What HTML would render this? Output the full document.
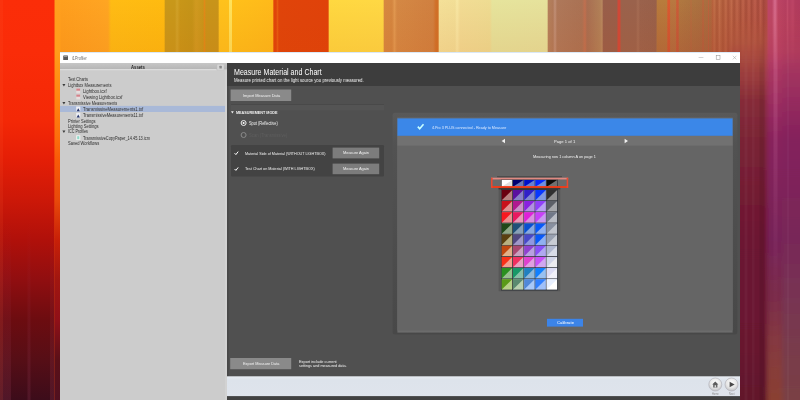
<!DOCTYPE html>
<html><head><meta charset="utf-8"><title>i1Profiler</title>
<style>
*{margin:0;padding:0;box-sizing:border-box}
html,body{width:800px;height:400px;overflow:hidden;background:#50101c;font-family:"Liberation Sans",sans-serif}
svg{position:absolute;left:0;top:0;display:block}
.t{position:absolute;white-space:nowrap;transform-origin:0 50%}
</style></head><body>
<svg width="800" height="400" viewBox="0 0 800 400">
<defs>
<linearGradient id="gt" gradientUnits="userSpaceOnUse" x1="0" y1="0" x2="800" y2="0"><stop offset="0.00000" stop-color="#f83c12"/><stop offset="0.00375" stop-color="#fa3009"/><stop offset="0.06750" stop-color="#fb2c08"/><stop offset="0.06938" stop-color="#ff9e1c"/><stop offset="0.12500" stop-color="#ffa422"/><stop offset="0.13500" stop-color="#ffa622"/><stop offset="0.13875" stop-color="#ffbc14"/><stop offset="0.20500" stop-color="#ffbb10"/><stop offset="0.20688" stop-color="#c8981a"/><stop offset="0.21875" stop-color="#c8981a"/><stop offset="0.22125" stop-color="#d0a228"/><stop offset="0.22500" stop-color="#c89618"/><stop offset="0.24000" stop-color="#c49418"/><stop offset="0.24500" stop-color="#d09a20"/><stop offset="0.25375" stop-color="#c8961a"/><stop offset="0.25562" stop-color="#e08a18"/><stop offset="0.25750" stop-color="#c8941a"/><stop offset="0.27250" stop-color="#c8941a"/><stop offset="0.27437" stop-color="#ffc21c"/><stop offset="0.28563" stop-color="#ffc21c"/><stop offset="0.28687" stop-color="#ffe25a"/><stop offset="0.28937" stop-color="#ffe25a"/><stop offset="0.29063" stop-color="#ffc01a"/><stop offset="0.34063" stop-color="#ffba1a"/><stop offset="0.34250" stop-color="#e0440a"/><stop offset="0.34500" stop-color="#e0440a"/><stop offset="0.34687" stop-color="#e85a10"/><stop offset="0.34875" stop-color="#e0440a"/><stop offset="0.41000" stop-color="#e0420a"/><stop offset="0.41187" stop-color="#ffd840"/><stop offset="0.47875" stop-color="#ffd844"/><stop offset="0.48063" stop-color="#d68840"/><stop offset="0.49000" stop-color="#d48640"/><stop offset="0.49312" stop-color="#e09850"/><stop offset="0.49625" stop-color="#d48844"/><stop offset="0.54125" stop-color="#d08040"/><stop offset="0.54500" stop-color="#d07028"/><stop offset="0.54750" stop-color="#d07028"/><stop offset="0.54937" stop-color="#f4e098"/><stop offset="0.56875" stop-color="#f2de96"/><stop offset="0.57125" stop-color="#f8e8a4"/><stop offset="0.57500" stop-color="#f2dc94"/><stop offset="0.61250" stop-color="#eedc92"/><stop offset="0.61500" stop-color="#e6e49c"/><stop offset="0.68375" stop-color="#e6e29c"/><stop offset="0.68563" stop-color="#b4805c"/><stop offset="0.69125" stop-color="#b07a5a"/><stop offset="0.69375" stop-color="#c09078"/><stop offset="0.69625" stop-color="#ae785a"/><stop offset="0.72750" stop-color="#aa7254"/><stop offset="0.73125" stop-color="#c07050"/><stop offset="0.73375" stop-color="#a86e52"/><stop offset="0.75000" stop-color="#b08058"/><stop offset="0.75250" stop-color="#b88860"/><stop offset="0.75438" stop-color="#985e4a"/><stop offset="0.77125" stop-color="#985e4a"/><stop offset="0.77250" stop-color="#d04838"/><stop offset="0.77500" stop-color="#d04838"/><stop offset="0.77625" stop-color="#9a624c"/><stop offset="0.79500" stop-color="#9a624c"/><stop offset="0.79750" stop-color="#a46c54"/><stop offset="0.80000" stop-color="#9a624c"/><stop offset="0.82000" stop-color="#98604a"/><stop offset="0.82188" stop-color="#b87c3c"/><stop offset="0.83313" stop-color="#b87c3c"/><stop offset="0.83500" stop-color="#dc5a30"/><stop offset="0.83700" stop-color="#dc5a30"/><stop offset="0.83825" stop-color="#b87840"/><stop offset="0.84437" stop-color="#b87840"/><stop offset="0.84600" stop-color="#cc5c38"/><stop offset="0.84775" stop-color="#cc5c38"/><stop offset="0.84900" stop-color="#b07840"/><stop offset="0.86250" stop-color="#ac7440"/><stop offset="0.86375" stop-color="#b86c40"/><stop offset="0.86500" stop-color="#ac7440"/><stop offset="0.87750" stop-color="#aa7040"/><stop offset="0.87875" stop-color="#c0603c"/><stop offset="0.88025" stop-color="#aa7040"/><stop offset="0.88438" stop-color="#aa6e40"/><stop offset="0.88562" stop-color="#bc643e"/><stop offset="0.88687" stop-color="#aa6c40"/><stop offset="0.88875" stop-color="#ae6a3e"/><stop offset="0.89125" stop-color="#b8603c"/><stop offset="0.89250" stop-color="#c2724a"/><stop offset="0.89625" stop-color="#ac5a38"/><stop offset="0.89938" stop-color="#c16f4a"/><stop offset="0.90375" stop-color="#ab5838"/><stop offset="0.90750" stop-color="#c16c4a"/><stop offset="0.91000" stop-color="#aa5539"/><stop offset="0.91438" stop-color="#c06a4b"/><stop offset="0.91750" stop-color="#a85339"/><stop offset="0.92125" stop-color="#bf674b"/><stop offset="0.92563" stop-color="#a7513a"/><stop offset="0.92875" stop-color="#bf644b"/><stop offset="0.93250" stop-color="#a64e3a"/><stop offset="0.93625" stop-color="#be614b"/><stop offset="0.93937" stop-color="#a54c3b"/><stop offset="0.94375" stop-color="#bd5e4c"/><stop offset="0.94750" stop-color="#a44a3b"/><stop offset="0.95063" stop-color="#bc5c4c"/><stop offset="0.95437" stop-color="#a3473c"/><stop offset="0.95813" stop-color="#b04c46"/><stop offset="0.96062" stop-color="#bc4666"/><stop offset="0.96500" stop-color="#bc4666"/><stop offset="0.96875" stop-color="#d66c8e"/><stop offset="0.97250" stop-color="#bc4464"/><stop offset="0.98250" stop-color="#b43e60"/><stop offset="0.98438" stop-color="#c04a6a"/><stop offset="0.98625" stop-color="#b43e60"/><stop offset="0.99125" stop-color="#bc4466"/><stop offset="0.99375" stop-color="#b23c5e"/><stop offset="1.00000" stop-color="#b03a5e"/></linearGradient>
<linearGradient id="gv" gradientUnits="userSpaceOnUse" x1="0" y1="0" x2="0" y2="60"><stop offset="0" stop-color="#c04000" stop-opacity="0"/><stop offset="1" stop-color="#d04800" stop-opacity="0.11"/></linearGradient>
<linearGradient id="gv2" gradientUnits="userSpaceOnUse" x1="0" y1="0" x2="0" y2="60"><stop offset="0" stop-color="#a04038" stop-opacity="0"/><stop offset="1" stop-color="#a04038" stop-opacity="0.3"/></linearGradient>
<linearGradient id="l1" gradientUnits="userSpaceOnUse" x1="0" y1="0" x2="0" y2="400"><stop offset="0.00000" stop-color="#fb2d08"/><stop offset="0.13000" stop-color="#fa2c08"/><stop offset="0.30000" stop-color="#f42806"/><stop offset="0.40000" stop-color="#e41e06"/><stop offset="0.50000" stop-color="#cc1808"/><stop offset="0.60000" stop-color="#b0100a"/><stop offset="0.70000" stop-color="#900e10"/><stop offset="0.80000" stop-color="#6c0c10"/><stop offset="0.90000" stop-color="#560e16"/><stop offset="1.00000" stop-color="#3c0c1a"/></linearGradient>
<linearGradient id="l2" gradientUnits="userSpaceOnUse" x1="0" y1="0" x2="0" y2="400"><stop offset="0.00000" stop-color="#ffa01e"/><stop offset="0.13000" stop-color="#ff9c1a"/><stop offset="0.25000" stop-color="#ff8410"/><stop offset="0.35000" stop-color="#fc6c0c"/><stop offset="0.40000" stop-color="#f85a08"/><stop offset="0.50000" stop-color="#e84a0a"/><stop offset="0.60000" stop-color="#c82008"/><stop offset="0.70000" stop-color="#a01610"/><stop offset="0.80000" stop-color="#901018"/><stop offset="0.90000" stop-color="#5a1018"/><stop offset="1.00000" stop-color="#501020"/></linearGradient>
<linearGradient id="ra" gradientUnits="userSpaceOnUse" x1="0" y1="0" x2="0" y2="400"><stop offset="0.00000" stop-color="#b8603c"/><stop offset="0.10000" stop-color="#b05840"/><stop offset="0.13000" stop-color="#a84a40"/><stop offset="0.20000" stop-color="#983a3c"/><stop offset="0.25000" stop-color="#862c38"/><stop offset="0.35000" stop-color="#7a2436"/><stop offset="0.60000" stop-color="#6c1430"/><stop offset="0.80000" stop-color="#6a1230"/><stop offset="1.00000" stop-color="#62122c"/></linearGradient>
<linearGradient id="rb" gradientUnits="userSpaceOnUse" x1="0" y1="0" x2="0" y2="400"><stop offset="0.00000" stop-color="#bc4666"/><stop offset="0.13000" stop-color="#b43c64"/><stop offset="0.35000" stop-color="#88225c"/><stop offset="0.60000" stop-color="#762258"/><stop offset="0.75000" stop-color="#7a2c48"/><stop offset="0.85000" stop-color="#843840"/><stop offset="1.00000" stop-color="#8a4032"/></linearGradient>
<linearGradient id="rc" gradientUnits="userSpaceOnUse" x1="0" y1="0" x2="0" y2="400"><stop offset="0.00000" stop-color="#b43e60"/><stop offset="0.13000" stop-color="#ac3a60"/><stop offset="0.35000" stop-color="#84205c"/><stop offset="0.60000" stop-color="#782858"/><stop offset="0.80000" stop-color="#783850"/><stop offset="1.00000" stop-color="#7a4044"/></linearGradient>
<linearGradient id="fade" gradientUnits="userSpaceOnUse" x1="0" y1="20" x2="0" y2="70"><stop offset="0" stop-color="#fff" stop-opacity="0"/><stop offset="1" stop-color="#fff" stop-opacity="1"/></linearGradient>
<linearGradient id="pk" gradientUnits="userSpaceOnUse" x1="0" y1="0" x2="0" y2="400"><stop offset="0" stop-color="#ffb0d8" stop-opacity="0.2"/><stop offset="0.4" stop-color="#ffb0d8" stop-opacity="0.10"/><stop offset="0.7" stop-color="#ffb0d8" stop-opacity="0.02"/><stop offset="1" stop-color="#ffb0d8" stop-opacity="0"/></linearGradient>
<linearGradient id="frm" x1="0" y1="0" x2="0" y2="1"><stop offset="0" stop-color="#595959"/><stop offset="0.15" stop-color="#525252"/><stop offset="1" stop-color="#484848"/></linearGradient>
<linearGradient id="lf" gradientUnits="userSpaceOnUse" x1="0" y1="220" x2="0" y2="400"><stop offset="0" stop-color="#a04060" stop-opacity="0"/><stop offset="1" stop-color="#a04060" stop-opacity="0.2"/></linearGradient>
<linearGradient id="hdr" x1="0" y1="0" x2="0" y2="1"><stop offset="0" stop-color="#c6c6c6"/><stop offset="1" stop-color="#b6b6b6"/></linearGradient>
<linearGradient id="bar" x1="0" y1="0" x2="0" y2="1"><stop offset="0" stop-color="#e8edf3"/><stop offset="0.2" stop-color="#dde3eb"/><stop offset="1" stop-color="#dfe4ec"/></linearGradient>
<radialGradient id="ball" cx="0.5" cy="0.36" r="0.66"><stop offset="0" stop-color="#fcfcfc"/><stop offset="0.6" stop-color="#e6e6e6"/><stop offset="1" stop-color="#bcbcc0"/></radialGradient>
<mask id="mk"><rect x="700" y="0" width="100" height="400" fill="url(#fade)"/></mask>
<filter id="bx" x="-20%" y="0" width="140%" height="100%"><feGaussianBlur stdDeviation="2.2 0"/></filter>
<filter id="sh" x="-5%" y="-5%" width="110%" height="110%"><feGaussianBlur stdDeviation="2.5"/></filter>
</defs>
<rect width="800" height="400" fill="url(#gt)"/>
<rect width="800" height="60" fill="url(#gv)"/>
<rect x="657" y="0" width="110" height="60" fill="url(#gv2)"/>
<rect x="0" y="0" width="54.6" height="400" fill="url(#l1)"/>
<rect x="0" y="0" width="3" height="400" fill="#ff6030" opacity="0.12"/>
<rect x="0" y="220" width="11" height="180" fill="url(#lf)"/>
<rect x="27.5" y="220" width="3" height="180" fill="url(#lf)"/>
<rect x="50" y="220" width="4.6" height="180" fill="url(#lf)"/>
<rect x="54.6" y="0" width="6" height="400" fill="url(#l2)"/>
<g mask="url(#mk)"><g filter="url(#bx)">
<rect x="730" y="0" width="37" height="400" fill="url(#ra)"/>
<rect x="767" y="0" width="15" height="400" fill="url(#rb)"/>
<rect x="782" y="0" width="30" height="400" fill="url(#rc)"/>
</g>
<rect x="744.5" y="0" width="3" height="400" fill="#fff" opacity="0.035"/>
<rect x="752" y="0" width="2.5" height="400" fill="#fff" opacity="0.03"/>
<rect x="759.5" y="0" width="5" height="400" fill="#000" opacity="0.08"/>
<rect x="773.5" y="0" width="4" height="400" fill="url(#pk)"/>
<rect x="787" y="0" width="2" height="400" fill="#fff" opacity="0.03"/>
</g>

<!-- window shadow + body -->
<rect x="60.00" y="52.00" width="680.00" height="348.00" fill="#505050" />
<rect x="60.00" y="52.00" width="680.00" height="11.10" fill="#ffffff" />
<rect x="60.00" y="52.00" width="680.00" height="0.50" fill="#b4d0ec" />
<!-- title icon -->
<rect x="63.20" y="55.40" width="4.80" height="4.60" fill="#5a5a5a" rx="0.6"/>
<rect x="63.80" y="55.40" width="3.60" height="1.60" fill="#9a9a9a" />
<!-- window controls -->
<rect x="698.60" y="57.30" width="4.80" height="0.50" fill="#a8a8a8" />
<rect x="716.2" y="55.6" width="3.8" height="3.8" fill="none" stroke="#8c8c8c" stroke-width="0.5"/>
<path d="M732.8 55.8 L736.4 59.4 M736.4 55.8 L732.8 59.4" stroke="#a0a0a0" stroke-width="0.5" fill="none"/>
<!-- left panel -->
<rect x="60.00" y="63.00" width="167.00" height="337.00" fill="#cccccc" />
<rect x="60.00" y="63.00" width="167.00" height="6.20" fill="url(#hdr)" />
<rect x="60.00" y="69.20" width="156.50" height="1.00" fill="#e2e2e2" />
<rect x="217.00" y="64.20" width="7.00" height="6.20" fill="#d6d6d6" rx="0.8" stroke="#bdbdbd" stroke-width="0.4"/>
<rect x="219.40" y="65.80" width="2.40" height="2.80" fill="#8a8a8a" rx="0.5"/>
<rect x="60.00" y="105.90" width="167.00" height="6.10" fill="#a9b9d8" />
<polygon points="62.4,83.90 65.4,83.90 63.9,86.50" fill="#3a3a3a"/>
<rect x="76.30" y="88.60" width="3.80" height="4.80" fill="#e6dede" />
<rect x="76.30" y="88.60" width="3.80" height="2.10" fill="#d4828a" />
<rect x="76.30" y="94.60" width="3.80" height="4.80" fill="#e6dede" />
<rect x="76.30" y="94.60" width="3.80" height="2.10" fill="#d4828a" />
<polygon points="62.4,101.90 65.4,101.90 63.9,104.50" fill="#3a3a3a"/>
<rect x="76.20" y="106.50" width="4.10" height="4.80" fill="#eceef4" />
<polygon points="76.6,111.20 78.25,108.20 79.9,111.20" fill="#26346a"/>
<rect x="76.20" y="112.80" width="4.10" height="4.80" fill="#eceef4" />
<polygon points="76.6,117.50 78.25,114.50 79.9,117.50" fill="#26346a"/>
<polygon points="62.4,130.50 65.4,130.50 63.9,133.10" fill="#3a3a3a"/>
<rect x="76.20" y="135.30" width="4.10" height="4.80" fill="#f2f4f2" />
<rect x="77.20" y="136.20" width="2.10" height="3.00" fill="#8ed8c8" />
<rect x="225.00" y="70.20" width="2.00" height="329.80" fill="#d2d2d2" />
<rect x="227.00" y="86.00" width="1.60" height="290.60" fill="#484848" />
<!-- dark header -->
<rect x="227.00" y="63.00" width="513.00" height="23.00" fill="#3d3d3d" />
<!-- import btn -->
<rect x="230.60" y="89.50" width="60.60" height="11.50" fill="#8a8a8a" />
<rect x="231.00" y="104.30" width="153.00" height="0.70" fill="#474747" />
<rect x="231.00" y="105.00" width="153.00" height="5.40" fill="#545454" />
<polygon points="231,111.2 233.8,111.2 232.4,113.6" fill="#eeeeee"/>
<circle cx="243.6" cy="123" r="2.5" fill="none" stroke="#eeeeee" stroke-width="1"/>
<circle cx="243.6" cy="123" r="1.05" fill="#ffffff"/>
<circle cx="243.6" cy="135" r="2.5" fill="none" stroke="#8a8a8a" stroke-width="1"/>
<!-- checks box -->
<rect x="231.00" y="145.00" width="153.00" height="31.40" fill="#434343" rx="1.2"/>
<rect x="332.60" y="147.60" width="46.60" height="10.80" fill="#7c7c7c" />
<rect x="332.60" y="163.60" width="46.60" height="10.60" fill="#7c7c7c" />
<path d="M234.6 153.2 L235.9 154.6 L238.2 151.6" stroke="#ffffff" stroke-width="1.0" fill="none"/>
<path d="M234.6 169 L235.9 170.4 L238.2 167.4" stroke="#ffffff" stroke-width="1.0" fill="none"/>
<!-- export -->
<rect x="230.20" y="358.00" width="61.00" height="11.20" fill="#8a8a8a" />
<!-- right pane -->
<rect x="392.60" y="112.80" width="344.80" height="221.60" fill="url(#frm)" rx="2.5"/>
<rect x="397.40" y="117.60" width="335.20" height="215.00" fill="#6c6c6c" />
<rect x="397.40" y="117.80" width="335.20" height="212.80" fill="#656565" />
<rect x="397.40" y="118.40" width="335.20" height="17.50" fill="#3b87e8" />
<rect x="397.40" y="135.90" width="335.20" height="9.70" fill="#717171" />
<path d="M417.8 126.6 L419.7 128.7 L423.5 124.3" stroke="#c8ffff" stroke-width="1.6" fill="none"/>
<polygon points="505,138.8 505,143.2 501.6,141" fill="#f0f0f0"/>
<polygon points="624.6,138.8 624.6,143.2 628,141" fill="#f0f0f0"/>
<!-- chart -->
<rect x="497.00" y="176.40" width="65.00" height="0.80" fill="#3c3c3c" />
<rect x="498.60" y="177.00" width="61.60" height="114.20" fill="#575757" />
<rect x="501.00" y="178.00" width="56.90" height="112.40" fill="#2a2e36" />
<rect x="501.78" y="179.90" width="10.46" height="6.90" fill="#e0e0e0" />
<polygon points="501.78,179.90 512.24,179.90 501.78,186.80" fill="#ffffff"/>
<rect x="513.00" y="179.90" width="10.46" height="6.90" fill="#6a78b8" />
<polygon points="513.00,179.90 523.46,179.90 513.00,186.80" fill="#000070"/>
<rect x="524.22" y="179.90" width="10.46" height="6.90" fill="#6a80d0" />
<polygon points="524.22,179.90 534.68,179.90 524.22,186.80" fill="#0010c8"/>
<rect x="535.44" y="179.90" width="10.46" height="6.90" fill="#7090e0" />
<polygon points="535.44,179.90 545.90,179.90 535.44,186.80" fill="#0828ff"/>
<rect x="546.66" y="179.90" width="10.46" height="6.90" fill="#707070" />
<polygon points="546.66,179.90 557.12,179.90 546.66,186.80" fill="#0c0c0c"/>
<rect x="501.78" y="189.94" width="10.46" height="10.40" fill="#b88080" />
<polygon points="501.78,189.94 512.24,189.94 501.78,200.34" fill="#6a0010"/>
<rect x="513.00" y="189.94" width="10.46" height="10.40" fill="#8880c8" />
<polygon points="513.00,189.94 523.46,189.94 513.00,200.34" fill="#5a10a0"/>
<rect x="524.22" y="189.94" width="10.46" height="10.40" fill="#8088d0" />
<polygon points="524.22,189.94 534.68,189.94 524.22,200.34" fill="#3020c8"/>
<rect x="535.44" y="189.94" width="10.46" height="10.40" fill="#8098e0" />
<polygon points="535.44,189.94 545.90,189.94 535.44,200.34" fill="#0838ff"/>
<rect x="546.66" y="189.94" width="10.46" height="10.40" fill="#909090" />
<polygon points="546.66,189.94 557.12,189.94 546.66,200.34" fill="#303030"/>
<rect x="501.78" y="201.10" width="10.46" height="10.40" fill="#e09090" />
<polygon points="501.78,201.10 512.24,201.10 501.78,211.50" fill="#c8101a"/>
<rect x="513.00" y="201.10" width="10.46" height="10.40" fill="#c890c8" />
<polygon points="513.00,201.10 523.46,201.10 513.00,211.50" fill="#b01890"/>
<rect x="524.22" y="201.10" width="10.46" height="10.40" fill="#b090e0" />
<polygon points="524.22,201.10 534.68,201.10 524.22,211.50" fill="#8a20e0"/>
<rect x="535.44" y="201.10" width="10.46" height="10.40" fill="#b8a0f0" />
<polygon points="535.44,201.10 545.90,201.10 535.44,211.50" fill="#9040f8"/>
<rect x="546.66" y="201.10" width="10.46" height="10.40" fill="#a6a8ac" />
<polygon points="546.66,201.10 557.12,201.10 546.66,211.50" fill="#5c6068"/>
<rect x="501.78" y="212.26" width="10.46" height="10.40" fill="#e89090" />
<polygon points="501.78,212.26 512.24,212.26 501.78,222.66" fill="#f81820"/>
<rect x="513.00" y="212.26" width="10.46" height="10.40" fill="#e898b8" />
<polygon points="513.00,212.26 523.46,212.26 513.00,222.66" fill="#e81860"/>
<rect x="524.22" y="212.26" width="10.46" height="10.40" fill="#d890e0" />
<polygon points="524.22,212.26 534.68,212.26 524.22,222.66" fill="#e020d8"/>
<rect x="535.44" y="212.26" width="10.46" height="10.40" fill="#c898f0" />
<polygon points="535.44,212.26 545.90,212.26 535.44,222.66" fill="#c840f8"/>
<rect x="546.66" y="212.26" width="10.46" height="10.40" fill="#b8bcc4" />
<polygon points="546.66,212.26 557.12,212.26 546.66,222.66" fill="#707888"/>
<rect x="501.78" y="223.42" width="10.46" height="10.40" fill="#90a888" />
<polygon points="501.78,223.42 512.24,223.42 501.78,233.82" fill="#204818"/>
<rect x="513.00" y="223.42" width="10.46" height="10.40" fill="#88a0b8" />
<polygon points="513.00,223.42 523.46,223.42 513.00,233.82" fill="#205078"/>
<rect x="524.22" y="223.42" width="10.46" height="10.40" fill="#88a8e0" />
<polygon points="524.22,223.42 534.68,223.42 524.22,233.82" fill="#0850d0"/>
<rect x="535.44" y="223.42" width="10.46" height="10.40" fill="#90b0f0" />
<polygon points="535.44,223.42 545.90,223.42 535.44,233.82" fill="#0858f8"/>
<rect x="546.66" y="223.42" width="10.46" height="10.40" fill="#c0c4cc" />
<polygon points="546.66,223.42 557.12,223.42 546.66,233.82" fill="#8890a0"/>
<rect x="501.78" y="234.58" width="10.46" height="10.40" fill="#b8b080" />
<polygon points="501.78,234.58 512.24,234.58 501.78,244.98" fill="#5a4010"/>
<rect x="513.00" y="234.58" width="10.46" height="10.40" fill="#a098c8" />
<polygon points="513.00,234.58 523.46,234.58 513.00,244.98" fill="#504880"/>
<rect x="524.22" y="234.58" width="10.46" height="10.40" fill="#9098e0" />
<polygon points="524.22,234.58 534.68,234.58 524.22,244.98" fill="#4848c8"/>
<rect x="535.44" y="234.58" width="10.46" height="10.40" fill="#90b0f0" />
<polygon points="535.44,234.58 545.90,234.58 535.44,244.98" fill="#0858f8"/>
<rect x="546.66" y="234.58" width="10.46" height="10.40" fill="#c8ccd4" />
<polygon points="546.66,234.58 557.12,234.58 546.66,244.98" fill="#98a0b0"/>
<rect x="501.78" y="245.74" width="10.46" height="10.40" fill="#e0b088" />
<polygon points="501.78,245.74 512.24,245.74 501.78,256.14" fill="#c04810"/>
<rect x="513.00" y="245.74" width="10.46" height="10.40" fill="#c8a0c0" />
<polygon points="513.00,245.74 523.46,245.74 513.00,256.14" fill="#a84870"/>
<rect x="524.22" y="245.74" width="10.46" height="10.40" fill="#b8a0e0" />
<polygon points="524.22,245.74 534.68,245.74 524.22,256.14" fill="#9040d0"/>
<rect x="535.44" y="245.74" width="10.46" height="10.40" fill="#b0a8f0" />
<polygon points="535.44,245.74 545.90,245.74 535.44,256.14" fill="#8850f8"/>
<rect x="546.66" y="245.74" width="10.46" height="10.40" fill="#d8dce8" />
<polygon points="546.66,245.74 557.12,245.74 546.66,256.14" fill="#b0b8d0"/>
<rect x="501.78" y="256.90" width="10.46" height="10.40" fill="#f0a090" />
<polygon points="501.78,256.90 512.24,256.90 501.78,267.30" fill="#f83018"/>
<rect x="513.00" y="256.90" width="10.46" height="10.40" fill="#e8a0c0" />
<polygon points="513.00,256.90 523.46,256.90 513.00,267.30" fill="#f03060"/>
<rect x="524.22" y="256.90" width="10.46" height="10.40" fill="#e0a0e0" />
<polygon points="524.22,256.90 534.68,256.90 524.22,267.30" fill="#e040d0"/>
<rect x="535.44" y="256.90" width="10.46" height="10.40" fill="#d0a8f0" />
<polygon points="535.44,256.90 545.90,256.90 535.44,267.30" fill="#c850f8"/>
<rect x="546.66" y="256.90" width="10.46" height="10.40" fill="#ececf0" />
<polygon points="546.66,256.90 557.12,256.90 546.66,267.30" fill="#d0d4e8"/>
<rect x="501.78" y="268.06" width="10.46" height="10.40" fill="#98c090" />
<polygon points="501.78,268.06 512.24,268.06 501.78,278.46" fill="#2a9020"/>
<rect x="513.00" y="268.06" width="10.46" height="10.40" fill="#88c0a8" />
<polygon points="513.00,268.06 523.46,268.06 513.00,278.46" fill="#189868"/>
<rect x="524.22" y="268.06" width="10.46" height="10.40" fill="#90b8d8" />
<polygon points="524.22,268.06 534.68,268.06 524.22,278.46" fill="#2080c0"/>
<rect x="535.44" y="268.06" width="10.46" height="10.40" fill="#98c0f0" />
<polygon points="535.44,268.06 545.90,268.06 535.44,278.46" fill="#1080ff"/>
<rect x="546.66" y="268.06" width="10.46" height="10.40" fill="#f0f0f8" />
<polygon points="546.66,268.06 557.12,268.06 546.66,278.46" fill="#dcdcf4"/>
<rect x="501.78" y="279.22" width="10.46" height="10.40" fill="#b8d088" />
<polygon points="501.78,279.22 512.24,279.22 501.78,289.62" fill="#5a9a18"/>
<rect x="513.00" y="279.22" width="10.46" height="10.40" fill="#b8d0b0" />
<polygon points="513.00,279.22 523.46,279.22 513.00,289.62" fill="#5a8a70"/>
<rect x="524.22" y="279.22" width="10.46" height="10.40" fill="#a8c8f8" />
<polygon points="524.22,279.22 534.68,279.22 524.22,289.62" fill="#5088d8"/>
<rect x="535.44" y="279.22" width="10.46" height="10.40" fill="#a0c0f8" />
<polygon points="535.44,279.22 545.90,279.22 535.44,289.62" fill="#3080ff"/>
<rect x="546.66" y="279.22" width="10.46" height="10.40" fill="#ffffff" />
<polygon points="546.66,279.22 557.12,279.22 546.66,289.62" fill="#e8f0ff"/>
<rect x="493.00" y="179.80" width="8.20" height="6.20" fill="#6a6a6a" />
<rect x="557.80" y="179.80" width="8.60" height="6.20" fill="#6a6a6a" />
<rect x="491.00" y="177.70" width="77.20" height="1.80" fill="#e08a82" />
<rect x="491.00" y="186.10" width="77.20" height="1.80" fill="#f83a14" />
<rect x="491.00" y="177.70" width="1.60" height="10.20" fill="#e84a32" />
<rect x="566.60" y="177.70" width="1.60" height="10.20" fill="#e84a32" />
<rect x="498.60" y="188.00" width="61.60" height="1.40" fill="#3c3836" />
<!-- calibrate -->
<rect x="547.00" y="318.80" width="36.00" height="7.80" fill="#3c84e8" />
<!-- bottom bar -->
<rect x="227.00" y="376.30" width="513.00" height="20.00" fill="url(#bar)" />
<rect x="227.00" y="396.30" width="513.00" height="3.70" fill="#414141" />
<circle cx="715.3" cy="384.5" r="6.5" fill="url(#ball)" stroke="#b4b4bc" stroke-width="0.7"/>
<circle cx="731.5" cy="384.5" r="6.5" fill="url(#ball)" stroke="#b4b4bc" stroke-width="0.7"/>
<path d="M712.2 384.6 L715.3 381.4 L718.4 384.6 L717.4 384.6 L717.4 387.4 L713.2 387.4 L713.2 384.6 Z" fill="#5c5c5c"/><rect x="714.6" y="385.2" width="1.5" height="2.2" fill="#dcdcdc"/>
<polygon points="729.6,381.7 734.6,384.5 729.6,387.3" fill="#484848"/>

</svg>
<div class="t" style="left:72.00px;top:56px;font-size:4.8px;line-height:5.76px;color:#6a6a6a;transform:scaleX(0.781);">i1Profiler</div>
<div class="t" style="left:131.40px;top:65px;font-size:4.8px;line-height:5.76px;color:#222;font-weight:bold;transform:scaleX(0.877);">Assets</div>
<div class="t" style="left:68.00px;top:77px;font-size:4.8px;line-height:5.76px;color:#2c2c2c;transform:scaleX(0.824);">Test Charts</div>
<div class="t" style="left:68.00px;top:83px;font-size:4.8px;line-height:5.76px;color:#2c2c2c;transform:scaleX(0.849);">Lightbox Measurements</div>
<div class="t" style="left:83.00px;top:89px;font-size:4.8px;line-height:5.76px;color:#2c2c2c;transform:scaleX(0.888);">Lightbox.icxf</div>
<div class="t" style="left:83.00px;top:95px;font-size:4.8px;line-height:5.76px;color:#2c2c2c;transform:scaleX(0.883);">Viewing Lightbox.icxf</div>
<div class="t" style="left:68.00px;top:101px;font-size:4.8px;line-height:5.76px;color:#2c2c2c;transform:scaleX(0.804);">Transmissive Measurements</div>
<div class="t" style="left:83.00px;top:107px;font-size:4.8px;line-height:5.76px;color:#2c2c2c;transform:scaleX(0.874);">TransmissiveMeasurements1.txf</div>
<div class="t" style="left:83.00px;top:113px;font-size:4.8px;line-height:5.76px;color:#2c2c2c;transform:scaleX(0.845);">TransmissiveMeasurements11.txf</div>
<div class="t" style="left:68.00px;top:119px;font-size:4.8px;line-height:5.76px;color:#2c2c2c;transform:scaleX(0.838);">Printer Settings</div>
<div class="t" style="left:68.00px;top:124px;font-size:4.8px;line-height:5.76px;color:#2c2c2c;transform:scaleX(0.862);">Lighting Settings</div>
<div class="t" style="left:68.00px;top:129px;font-size:4.8px;line-height:5.76px;color:#2c2c2c;transform:scaleX(0.781);">ICC Profiles</div>
<div class="t" style="left:83.00px;top:136px;font-size:4.8px;line-height:5.76px;color:#2c2c2c;transform:scaleX(0.814);">TransmissiveCopyPaper_14.45.13.icm</div>
<div class="t" style="left:68.00px;top:141px;font-size:4.8px;line-height:5.76px;color:#2c2c2c;transform:scaleX(0.843);">Saved Workflows</div>
<div class="t" style="left:234.00px;top:68px;font-size:8.2px;line-height:9.84px;color:#ffffff;transform:scaleX(0.864);">Measure Material and Chart</div>
<div class="t" style="left:234.00px;top:78px;font-size:4.7px;line-height:5.64px;color:#f2f2f2;transform:scaleX(0.927);">Measure printed chart on the light source you previously measured.</div>
<div class="t" style="left:242.50px;top:93px;font-size:4.4px;line-height:5.28px;color:#f2f2f2;transform:scaleX(0.900);">Import Measure Data</div>
<div class="t" style="left:235.80px;top:110px;font-size:4.4px;line-height:5.28px;color:#f2f2f2;font-weight:bold;transform:scaleX(0.851);">MEASUREMENT MODE</div>
<div class="t" style="left:249.30px;top:121px;font-size:4.8px;line-height:5.76px;color:#f2f2f2;transform:scaleX(0.809);">Spot (Reflective)</div>
<div class="t" style="left:249.30px;top:133px;font-size:4.8px;line-height:5.76px;color:#5e5e5e;transform:scaleX(0.879);">Scan (Transmissive)</div>
<div class="t" style="left:244.80px;top:151px;font-size:4.3px;line-height:5.16px;color:#f2f2f2;transform:scaleX(0.863);">Material Side of Material (WITHOUT LIGHTBOX)</div>
<div class="t" style="left:342.70px;top:150px;font-size:4.3px;line-height:5.16px;color:#f2f2f2;transform:scaleX(0.903);">Measure Again</div>
<div class="t" style="left:244.80px;top:166px;font-size:4.3px;line-height:5.16px;color:#f2f2f2;transform:scaleX(0.872);">Test Chart on Material (WITH LIGHTBOX)</div>
<div class="t" style="left:342.70px;top:166px;font-size:4.3px;line-height:5.16px;color:#f2f2f2;transform:scaleX(0.903);">Measure Again</div>
<div class="t" style="left:243.00px;top:361px;font-size:4.4px;line-height:5.28px;color:#f2f2f2;transform:scaleX(0.878);">Export Measure Data</div>
<div class="t" style="left:299.25px;top:359px;font-size:4.2px;line-height:5.04px;color:#f2f2f2;transform:scaleX(0.924);">Export include current</div>
<div class="t" style="left:299.25px;top:363px;font-size:4.2px;line-height:5.04px;color:#f2f2f2;transform:scaleX(0.901);">settings and measured data.</div>
<div class="t" style="left:432.20px;top:125px;font-size:4.4px;line-height:5.28px;color:#dceaff;transform:scaleX(0.845);">i1Pro 3 PLUS connected - Ready to Measure</div>
<div class="t" style="left:554.40px;top:139px;font-size:4.3px;line-height:5.16px;color:#f2f2f2;transform:scaleX(0.964);">Page 1 of 1</div>
<div class="t" style="left:533.00px;top:154px;font-size:4.3px;line-height:5.16px;color:#f2f2f2;transform:scaleX(0.890);">Measuring row 1 column A on page 1</div>
<div class="t" style="left:556.50px;top:320px;font-size:4.3px;line-height:5.16px;color:#ffffff;transform:scaleX(0.988);">Calibrate</div>
<div class="t" style="left:711.80px;top:393px;font-size:2.6px;line-height:3.12px;color:#8a8a8a;transform:scaleX(0.980);">Home</div>
<div class="t" style="left:728.80px;top:393px;font-size:2.6px;line-height:3.12px;color:#8a8a8a;transform:scaleX(1.010);">Next</div>
</body></html>
